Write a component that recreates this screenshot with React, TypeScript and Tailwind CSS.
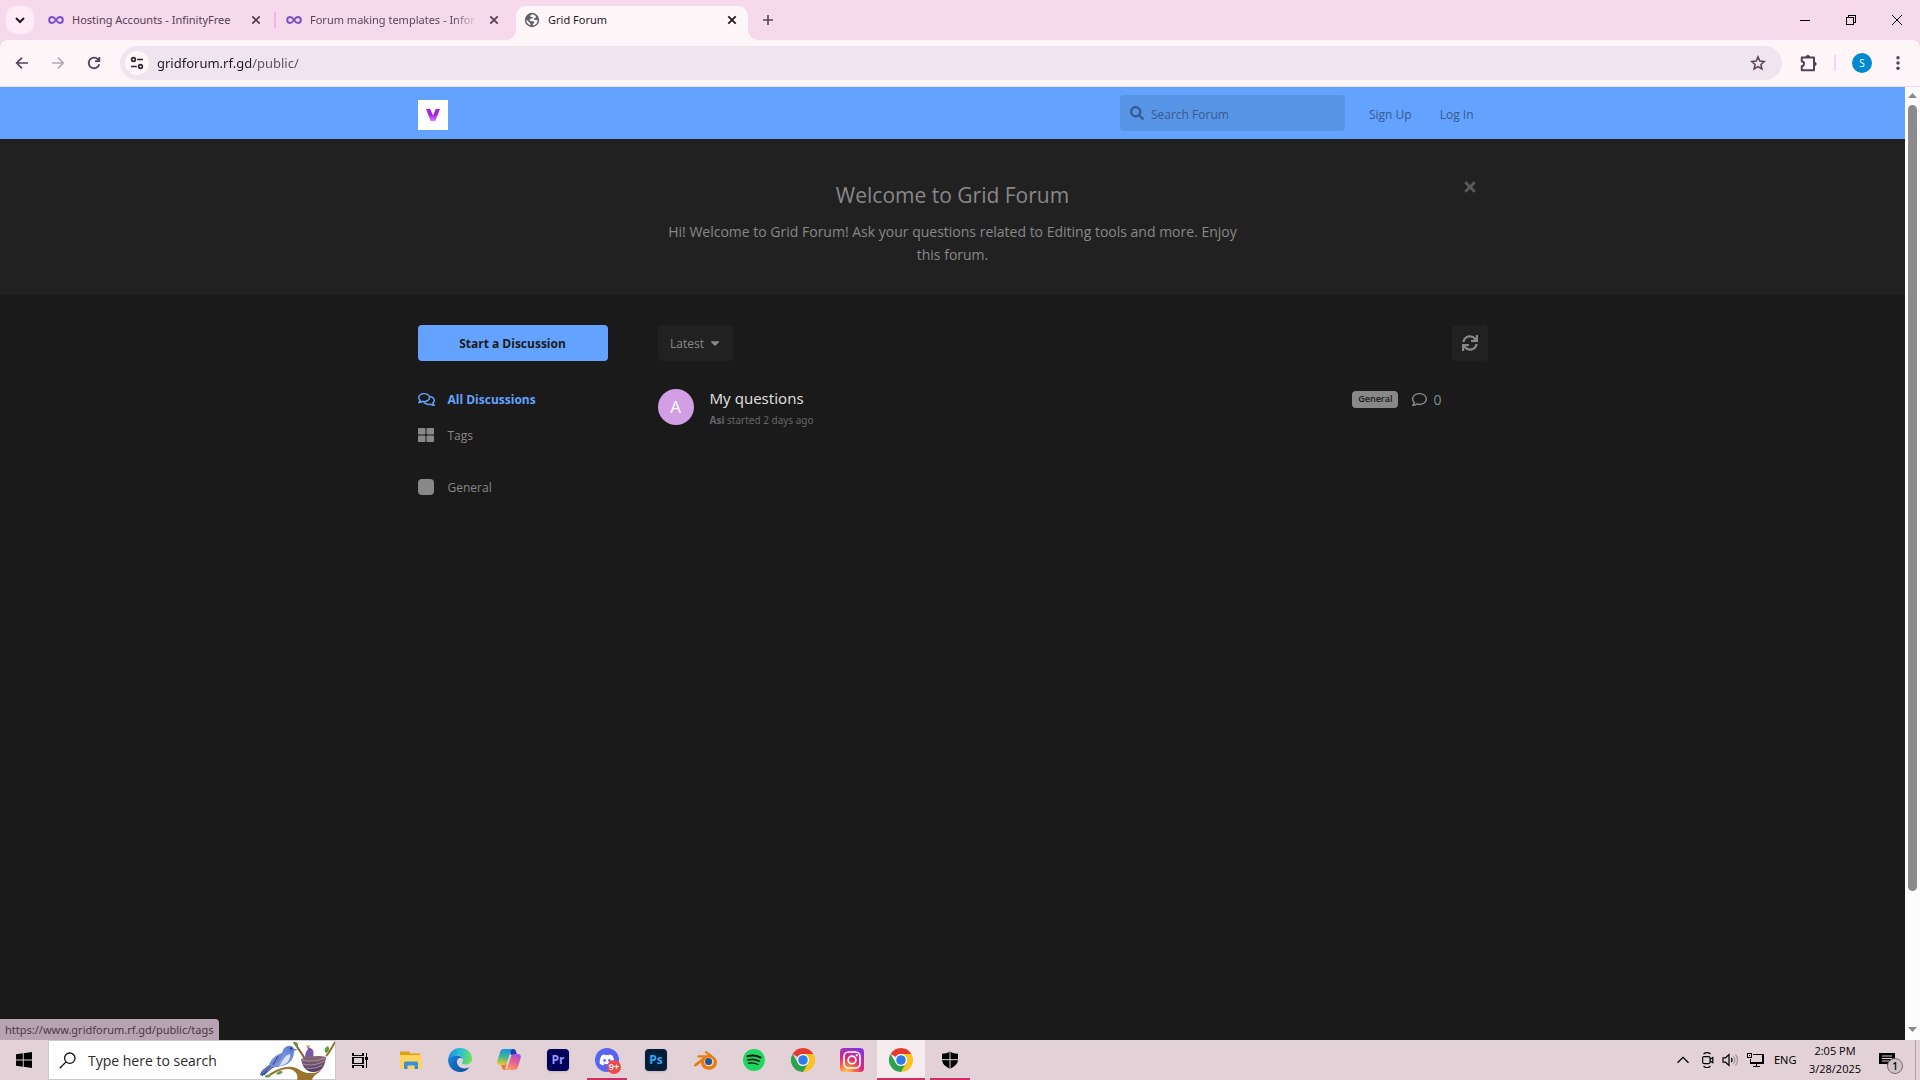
import React from "react";
import {
  FaCaretDown,
  FaDiscord,
  FaRegComment,
  FaRegComments,
  FaSearch,
  FaSync,
  FaThLarge,
  FaTimes,
} from "react-icons/fa";
import { SiBlender } from "react-icons/si";

/* ---------- Browser icons ---------- */

function InfinityIcon() {
  return (
    <svg viewBox="0 0 16 16" className="size-4 shrink-0" fill="none" stroke="#7b52c7" strokeWidth="2">
      <path d="M8 8C6.800 6.200 5.600 5 4.200 5a3 3 0 0 0 0 6C5.600 11 6.800 9.800 8 8s2.400-3 3.800-3a3 3 0 0 1 0 6C10.400 11 9.200 9.800 8 8z" />
    </svg>
  );
}

function GlobeIcon() {
  return (
    <svg viewBox="0 0 16 16" className="size-4 shrink-0">
      <circle cx="8" cy="8" r="7.200" fill="#5f6368" />
      <path
        d="M8.800 2.300 6 3.600l.6 1.300 2 .1.400 1.300-2.700.5-.9 1.500 1.900.9 2.200.1.900 1.500-1.700 1.400.1 1.400c2.600-.3 4.800-2.400 4.900-5.300l-1.900-.5-1.500.2-.6-1.300 2-.9.2-1.600A5.700 5.700 0 0 0 8.800 2.300zM2.200 7.600c.1 2.900 1.900 5 4.100 5.600l.2-1.500-2-2.200z"
        fill="#fff6fa"
      />
    </svg>
  );
}

function CloseIcon() {
  return (
    <svg viewBox="0 0 16 16" className="size-4" fill="none" stroke="currentColor" strokeWidth="1.800">
      <path d="M4.300 4.300l7.400 7.400M11.700 4.300l-7.400 7.400" />
    </svg>
  );
}

function ArrowIcon({ flip = false }: { flip?: boolean }) {
  return (
    <svg viewBox="0 0 16 16" className={flip ? "size-4 -scale-x-100" : "size-4"} fill="none" stroke="currentColor" strokeWidth="1.700">
      <path d="M14 8H3M8 2.700 2.700 8 8 13.300" />
    </svg>
  );
}

function ReloadIcon() {
  return (
    <svg viewBox="0 0 16 16" className="size-4" fill="none" stroke="currentColor" strokeWidth="1.800">
      <path d="M13.200 9.200A5.300 5.300 0 1 1 12 4.400L13 5.600" />
      <path d="M13.300 2v4.200H9" />
    </svg>
  );
}

function TuneIcon() {
  return (
    <svg viewBox="0 0 16 16" className="size-4" fill="none" stroke="#2a2228" strokeWidth="1.600">
      <circle cx="4.500" cy="4.500" r="1.900" />
      <path d="M8.200 4.500H14M2 11.500h5.800" />
      <circle cx="11.500" cy="11.500" r="1.900" />
    </svg>
  );
}

function StarIcon() {
  return (
    <svg viewBox="0 0 16 16" className="size-4" fill="none" stroke="#574055" strokeWidth="1.500">
      <path d="M8 1.900l1.800 4.200 4.500.4-3.400 3 1 4.400L8 11.600l-3.900 2.300 1-4.400-3.400-3 4.500-.4z" />
    </svg>
  );
}

function PuzzleIcon() {
  return (
    <svg viewBox="0 0 18 18" className="size-5" fill="none" stroke="#574055" strokeWidth="1.800">
      <path d="M2.500 4h11v11.500h-11v-3.700a2 2 0 0 0 0-4.100z" strokeLinejoin="round" />
      <path d="M6.400 3.600a1.600 1.600 0 0 1 3.200 0zM13.900 8.200a1.600 1.600 0 0 1 0 3.200z" fill="#574055" strokeWidth="0.800" />
    </svg>
  );
}

function Tab({ title, wide }: { title: string; wide: boolean }) {
  return (
    <div className="flex h-full w-[238px] items-center pl-2 text-[#574055]">
      <InfinityIcon />
      <span
        className={
          wide
            ? "ml-2 w-[168px] overflow-hidden whitespace-nowrap bg-linear-to-r from-[#574055] from-85% to-transparent bg-clip-text pt-px font-['Noto_Sans',sans-serif] text-[11px] text-transparent"
            : "ml-2 w-[168px] overflow-hidden whitespace-nowrap pt-px font-['Noto_Sans',sans-serif] text-[11px]"
        }
      >
        {title}
      </span>
      <button aria-label={"Close " + title} className="ml-2">
        <CloseIcon />
      </button>
    </div>
  );
}

function TabStrip() {
  return (
    <div className="flex h-10 shrink-0 items-center bg-[#f7d9ec]">
      <button aria-label="Search tabs" className="ml-1.5 flex size-7 items-center justify-center rounded-[10px] bg-[#ffebf6]">
        <svg viewBox="0 0 16 16" className="size-4" fill="none" stroke="#1f1a1d" strokeWidth="2">
          <path d="M4 6l4 4 4-4" />
        </svg>
      </button>
      <div className="ml-1.5 flex h-full items-center">
        <Tab title="Hosting Accounts - InfinityFree" wide={false} />
        <span className="-ml-1 mr-0.5 h-4 w-0.5 bg-[#f3b5e6]" />
        <Tab title="Forum making templates - Infor" wide />
      </div>
      <div className="relative mt-1.5 flex h-[34px] w-[232px] items-center self-stretch rounded-t-[10px] bg-[#fff6fa] pb-1.5 text-[#1f1a1d]">
        <svg viewBox="0 0 10 10" className="absolute bottom-0 -left-2.5 size-2.5" fill="#fff6fa">
          <path d="M10 0v10H0A10 10 0 0 0 10 0z" />
        </svg>
        <svg viewBox="0 0 10 10" className="absolute bottom-0 -right-2.5 size-2.5" fill="#fff6fa">
          <path d="M0 0v10h10A10 10 0 0 1 0 0z" />
        </svg>
        <span className="ml-2 flex flex-1 items-center gap-2 font-['Noto_Sans',sans-serif] text-[11px]">
          <GlobeIcon />
          <span className="pt-px">Grid Forum</span>
        </span>
        <button aria-label="Close Grid Forum" className="mr-2">
          <CloseIcon />
        </button>
      </div>
      <button aria-label="New tab" className="ml-3 text-[#574055]">
        <svg viewBox="0 0 16 16" className="size-4" fill="none" stroke="currentColor" strokeWidth="1.600">
          <path d="M8 3v10M3 8h10" />
        </svg>
      </button>
      <div className="ml-auto flex h-full items-center text-black">
        <button aria-label="Minimize" className="flex w-[46px] justify-center">
          <svg viewBox="0 0 10 10" className="size-2.5" stroke="currentColor" shapeRendering="crispEdges">
            <path d="M0 5.500h10" />
          </svg>
        </button>
        <button aria-label="Restore" className="flex w-[46px] justify-center">
          <svg viewBox="0 0 10 10" className="size-2.5" fill="none" stroke="currentColor" shapeRendering="crispEdges">
            <path d="M.5 2.500h7v7h-7zM2.500 2.500v-2h7v7h-2" />
          </svg>
        </button>
        <button aria-label="Close window" className="flex w-[46px] justify-center">
          <svg viewBox="0 0 10 10" className="size-2.5" fill="none" stroke="currentColor">
            <path d="M0 0l10 10M10 0L0 10" />
          </svg>
        </button>
      </div>
    </div>
  );
}

function Toolbar() {
  return (
    <div className="shrink-0 bg-[#f7d9ec]">
      <div className="flex h-[47px] items-center rounded-t-[8px] border-b border-[#eed9e6] bg-[#fff6fa] text-[#574055]">
        <div className="ml-3.5 flex items-center gap-5">
          <button aria-label="Back"><ArrowIcon /></button>
          <button aria-label="Forward" className="text-[#b3a8b0]"><ArrowIcon flip /></button>
          <button aria-label="Reload"><ReloadIcon /></button>
        </div>
        <div className="ml-[18px] flex h-[34px] flex-1 items-center rounded-full bg-[#f0e4ee] pl-[5px]">
          <button aria-label="Site information" className="flex size-6 items-center justify-center rounded-full bg-[#fff6fa]">
            <TuneIcon />
          </button>
          <input
            aria-label="Address"
            defaultValue="gridforum.rf.gd/public/"
            className="ml-2 min-w-0 flex-1 bg-linear-to-r from-[#1f1a1d] from-[94px] to-[#5c4c59] to-[94px] bg-clip-text pt-px font-['Noto_Sans',sans-serif] text-[13px] text-transparent outline-none"
          />
          <button aria-label="Bookmark" className="mr-4"><StarIcon /></button>
        </div>
        <button aria-label="Extensions" className="ml-[17px]"><PuzzleIcon /></button>
        <span className="ml-[15px] h-4 w-0.5 bg-[#fbd3f0]" />
        <button aria-label="Profile" className="ml-4 flex size-5 items-center justify-center rounded-full bg-[#0288d1] text-[10px] text-white">
          S
        </button>
        <button aria-label="Menu" className="ml-[18px] mr-3.5">
          <svg viewBox="0 0 16 16" className="size-4" fill="currentColor">
            <circle cx="8" cy="2.800" r="1.700" />
            <circle cx="8" cy="8" r="1.700" />
            <circle cx="8" cy="13.200" r="1.700" />
          </svg>
        </button>
      </div>
    </div>
  );
}

/* ---------- Forum ---------- */

function ForumHeader() {
  return (
    <header className="h-[52px] bg-[#63a3ff]">
      <div className="mx-auto flex h-full max-w-[1070px] items-center text-xs text-[#385a8e]">
        <a href="#" aria-label="Grid Forum" className="mt-1 flex size-[30px] items-center justify-center bg-white">
          <svg viewBox="0 0 14 12" className="w-3.5">
            <defs>
              <linearGradient id="brand" x1="0" y1="0" x2="0" y2="1">
                <stop offset="0.500" stopColor="#a424e6" />
                <stop offset="1" stopColor="#dc7cf2" />
              </linearGradient>
            </defs>
            <path d="M0 0h4.300L7 6.500 9.700 0H14L9.300 12H4.700z" fill="url(#brand)" />
          </svg>
        </a>
        <label className="ml-auto flex h-9 w-[225px] items-center rounded bg-[#5895e6] pl-2.5">
          <FaSearch className="size-3.5" />
          <input
            type="search"
            aria-label="Search Forum"
            placeholder="Search Forum"
            className="ml-[7px] min-w-0 flex-1 bg-transparent pt-1 outline-none placeholder:text-[#385a8e]"
          />
        </label>
        <button className="ml-6 pt-1">Sign Up</button>
        <button className="ml-7 mr-3.5 pt-1">Log In</button>
      </div>
    </header>
  );
}

function Hero() {
  return (
    <section className="bg-[#212121] text-[#888]">
      <div className="relative mx-auto h-[156px] max-w-[1070px] pt-10 text-center">
        <button aria-label="Close welcome message" className="absolute right-2.5 top-10 text-[#5a5a5a]">
          <FaTimes className="size-4" />
        </button>
        <h2 className="text-[21px] leading-8">Welcome to Grid Forum</h2>
        <p className="mx-auto mt-[9px] max-w-[590px] text-[14px] leading-[23px]">
          Hi! Welcome to Grid Forum! Ask your questions related to Editing tools and more. Enjoy this forum.
        </p>
      </div>
    </section>
  );
}

function SideNav() {
  return (
    <nav className="w-[190px] text-xs text-[#888]">
      <button className="h-9 w-full rounded bg-[#63a3ff] pt-px font-bold text-[#1a1a1a]">Start a Discussion</button>
      <ul className="mt-5">
        <li>
          <a href="#" className="flex h-9 items-center gap-[13px] font-bold text-[#63a3ff]">
            <FaRegComments className="size-[17px]" />
            <span className="pt-0.5">All Discussions</span>
          </a>
        </li>
        <li>
          <a href="#" className="flex h-9 items-center gap-3.5">
            <FaThLarge className="size-4" />
            <span className="pt-0.5">Tags</span>
          </a>
        </li>
        <li className="mt-4">
          <a href="#" className="flex h-9 items-center gap-3.5">
            <span className="size-4 rounded bg-[#888]" />
            <span className="pt-0.5">General</span>
          </a>
        </li>
      </ul>
    </nav>
  );
}

function DiscussionList() {
  return (
    <main className="min-w-0 flex-1 text-[#888]">
      <div className="flex items-center justify-between">
        <button className="flex h-9 w-[75px] items-center justify-center gap-1 rounded bg-[#212121] pl-0.5 text-xs">
          <span className="pt-0.5">Latest</span>
          <FaCaretDown className="size-3.5" />
        </button>
        <button aria-label="Refresh" className="flex size-9 items-center justify-center rounded bg-[#212121]">
          <FaSync className="size-4" />
        </button>
      </div>
      <article className="mt-6 flex pt-1">
        <span className="flex size-9 items-center justify-center rounded-full bg-[#d29ee4] text-[17px] text-white">A</span>
        <a href="#" className="-mt-px ml-4 flex-1">
          <h3 className="font-['Noto_Sans',sans-serif] text-[15px] leading-5 text-[#ddd]">My questions</h3>
          <p className="mt-0.5 font-['Noto_Sans',sans-serif] text-[10px] leading-5 text-[#666]">
            <strong>Asi</strong> started 2 days ago
          </p>
        </a>
        <div className="mr-[46px] flex h-5 items-center">
          <span className="flex h-[17px] items-center rounded bg-[#888] px-1.5 text-[9px] font-semibold text-[#1a1a1a]">General</span>
          <FaRegComment className="ml-3.5 size-[15px]" />
          <span className="ml-1.5 text-[14px]">0</span>
        </div>
      </article>
    </main>
  );
}

function Scrollbar() {
  return (
    <div className="flex w-[15px] shrink-0 flex-col items-center bg-[#fcfcfc] py-1.5">
      <svg viewBox="0 0 9 5" className="w-[9px]" fill="#8b8b8b"><path d="M0 5 4.500 0 9 5z" /></svg>
      <div className="mt-[7px] flex w-full flex-1 flex-col items-center">
        <span className="h-[85.200%] w-[9px] rounded-full bg-[#8b8b8b]" />
      </div>
      <svg viewBox="0 0 9 5" className="mb-0.5 w-[9px]" fill="#8b8b8b"><path d="M0 0 4.500 5 9 0z" /></svg>
    </div>
  );
}

/* ---------- Taskbar ---------- */

function BirdArt() {
  return (
    <svg viewBox="0 0 76 39" className="h-[39px] w-[76px] shrink-0">
      <defs>
        <linearGradient id="bird" x1="1" y1="0" x2="0" y2="1">
          <stop offset="0" stopColor="#4e6fd0" />
          <stop offset="0.500" stopColor="#8aa2e8" />
          <stop offset="1" stopColor="#4a5f9e" />
        </linearGradient>
        <linearGradient id="nest" x1="0" y1="0" x2="0" y2="1">
          <stop offset="0" stopColor="#8b6a72" />
          <stop offset="1" stopColor="#4d3a6b" />
        </linearGradient>
      </defs>
      <path d="M76 1c-3 5-5 10-9 14" stroke="#96702f" strokeWidth="2" fill="none" />
      <path d="M35 1c3 5 7 10 11 17" stroke="#7f602c" strokeWidth="2" fill="none" />
      <path d="M10 33c8-5 16-8 23-7 8 1 10 7 20 6 4 0 7-2 10-3-3 3-9 5-10 10H38c2-5-2-11-9-11-6 0-12 3-18 7z" fill="#9a742c" />
      <path d="M67 12c-3-3 0-6 2-7 2 3 1 6-2 7zM38 6c-2-1-2-3-1-5 2 1 3 3 1 5zM12 35c-3 2-6 2-6 0 2-2 4-2 6 0zM17 33c2-3 5-4 7-2-2 2-4 3-7 2z" fill="#5d9d49" />
      <path d="M1 34c1-5 5-7 9-10 2-6 6-10 13-12 1-5 5-8 9-7 2 1 3 2 3 3l4 0-4 2c0 8-4 13-11 15-6 1-11 1-14 4-3 3-5 7-9 5z" fill="url(#bird)" />
      <path d="M31 13c1 5-3 11-11 12 4-4 5-11 11-12z" fill="#dfe3f5" />
      <path d="M24 12c-6 2-10 6-12 12 7-1 12-5 12-12z" fill="#6d86c9" />
      <path d="M11 25l-8 10M14 26l-9 8M19 15l-5 9" stroke="#374a86" strokeWidth="1" />
      <circle cx="32" cy="7.500" r="0.900" fill="#16203f" />
      <path d="M46 17c0-4 1-7 3-9l-2-4 4 3c4 1 4 5 3 10z" fill="#7a58a8" />
      <path d="M47 5l3 2 1-3z" fill="#e5a24a" />
      <path d="M42 18c7-3 18-4 25-2-1 9-4 15-13 15-7 0-11-6-12-13z" fill="url(#nest)" />
      <path d="M43 19c7 2 16 1 23-2M44 23c7 2 14 1 21-3M47 27c6 1 11 0 16-3" stroke="#c3a0a8" strokeWidth="0.800" fill="none" />
    </svg>
  );
}

function ExplorerIcon() {
  return (
    <svg viewBox="0 0 24 24" className="size-6">
      <path d="M1 4.500a1 1 0 0 1 1-1h8l1.500 2H21v4H1z" fill="#e0a010" />
      <path d="M1 7h21a.8.8 0 0 1 .8.800V20a1 1 0 0 1-1 1H2a1 1 0 0 1-1-1z" fill="#ffd45e" />
      <path d="M5 21v-6a1.500 1.500 0 0 1 1.500-1.500h11A1.500 1.500 0 0 1 19 15v6h-3.500v-3.500h-7V21z" fill="#3a8fd8" />
    </svg>
  );
}

function EdgeIcon() {
  return (
    <svg viewBox="0 0 24 24" className="size-6">
      <defs>
        <linearGradient id="edgeTop" x1="0" y1="0.300" x2="1" y2="0.500">
          <stop offset="0" stopColor="#1b8fe0" />
          <stop offset="0.500" stopColor="#2bc3d6" />
          <stop offset="1" stopColor="#6ee056" />
        </linearGradient>
        <linearGradient id="edgeLow" x1="0" y1="0" x2="1" y2="1">
          <stop offset="0" stopColor="#1784dc" />
          <stop offset="1" stopColor="#0c4a9a" />
        </linearGradient>
      </defs>
      <path d="M.2 11C1 4.500 6 0 12 0c7 0 12 5 12 10.500 0 3.500-2.600 6-6 6-2.600 0-4-.8-4-1.700 0-.7 1-1.200 1-3 0-2.400-2.400-4.300-5.500-4.300C5.500 7.500 2 8.500.2 11z" fill="url(#edgeTop)" />
      <path d="M.2 11C2 8.500 5.500 7.300 9 7.500c3 .2 5 1.800 5.800 3-1-.6-2.300-.8-3.300-.4-2 .8-3 2.800-2.300 5.400 1 3.600 5 5.500 9 4.700 1.400-.3 2.600-.8 3.600-1.300C19.600 22 16 24 12 24 5 24-.5 18 .2 11z" fill="url(#edgeLow)" />
      <path d="M7.500 11.500c-1.500 5 1.500 10.500 7 12.200-8 .8-11.500-7-7-12.200z" fill="#1565b8" />
    </svg>
  );
}

function CopilotIcon() {
  return (
    <svg viewBox="0 0 24 24" className="size-6">
      <defs>
        <linearGradient id="copLeft" x1="0.500" y1="0" x2="0.400" y2="1">
          <stop offset="0" stopColor="#1593e8" />
          <stop offset="0.500" stopColor="#3fb98c" />
          <stop offset="1" stopColor="#f0c52c" />
        </linearGradient>
        <linearGradient id="copRight" x1="0.700" y1="0" x2="0.300" y2="1">
          <stop offset="0" stopColor="#a352e0" />
          <stop offset="0.500" stopColor="#ec5f92" />
          <stop offset="1" stopColor="#ffa05a" />
        </linearGradient>
      </defs>
      <path d="M12 1h4c2 0 2.700 1.300 3.200 3L20 7h-6z" fill="#1b3fae" />
      <path d="M6.500 1H16c-1.500.3-2.200 1.500-2.800 3.500l-3 9.500c-.7 2.200-1.700 3-4 3H3c-2.600 0-3.300-2-2.500-4.700L3 4.200C3.700 2 4.700 1 6.500 1z" fill="url(#copLeft)" />
      <path d="M17.500 22H8c1.500-.3 2.200-1.500 2.800-3.500l3-9.500c.7-2.200 1.700-3 4-3H21c2.600 0 3.300 2 2.500 4.700L21 18.800c-.7 2.200-1.700 3.200-3.500 3.200z" fill="url(#copRight)" />
      <path d="M4 17h2.300c2 0 3-.7 3.700-2.500L8.500 20C8 21.500 8.500 22 9 22 5.500 22 5.300 21 4.700 19z" fill="#ee7a33" />
    </svg>
  );
}

function ChromeIcon() {
  return (
    <svg viewBox="0 0 24 24" className="size-6">
      <path d="M12 0a12 12 0 0 1 10.400 6H12a6 6 0 0 0-5.200 3L1.600 6A12 12 0 0 1 12 0z" fill="#e33b2e" />
      <path d="M22.400 6A12 12 0 0 1 12 24l5.200-9A6 6 0 0 0 17.200 9L12 6z" fill="#fcc31e" />
      <path d="M12 24A12 12 0 0 1 1.600 6l5.200 9a6 6 0 0 0 7.500 2.600l2.900-2.600z" fill="#2ba24c" />
      <circle cx="12" cy="12" r="6" fill="#fff" />
      <circle cx="12" cy="12" r="4.800" fill="#2f7de9" />
    </svg>
  );
}

function InstagramIcon() {
  return (
    <svg viewBox="0 0 24 24" className="size-6">
      <defs>
        <radialGradient id="insta" cx="0.270" cy="1.050" r="1.100">
          <stop offset="0" stopColor="#ffdc6a" />
          <stop offset="0.300" stopColor="#fb7a3a" />
          <stop offset="0.600" stopColor="#e0257c" />
          <stop offset="1" stopColor="#8a34d8" />
        </radialGradient>
      </defs>
      <rect width="24" height="24" rx="4" fill="url(#insta)" />
      <g fill="none" stroke="#fff" strokeWidth="1.700">
        <rect x="4" y="4" width="16" height="16" rx="4.500" />
        <circle cx="12" cy="12" r="3.900" />
      </g>
      <circle cx="16.700" cy="7.300" r="1.100" fill="#fff" />
    </svg>
  );
}

function SpotifyIcon() {
  return (
    <svg viewBox="0 0 22 22" className="size-[22px]">
      <circle cx="11" cy="11" r="11" fill="#1ed760" />
      <g fill="none" stroke="#0a1a10" strokeLinecap="round">
        <path d="M4.500 7.200c4.500-1.200 9.200-.8 13 1.300" strokeWidth="2" />
        <path d="M5 10.900c3.900-1 7.900-.6 11.300 1.300" strokeWidth="1.700" />
        <path d="M5.500 14.300c3.400-.8 6.600-.4 9.500 1.200" strokeWidth="1.400" />
      </g>
    </svg>
  );
}

function AdobeTile({ label, tone }: { label: string; tone: string }) {
  return <span className={"flex size-[22px] items-center justify-center rounded text-[12px] font-bold shadow " + tone}>{label}</span>;
}

function DiscordIcon() {
  return (
    <span className="relative flex size-6 items-center justify-center rounded-full bg-[#5865f2] text-white">
      <FaDiscord className="size-4" />
      <span className="absolute -bottom-0.5 -right-0.5 flex size-3.5 items-center justify-center rounded-full bg-[#ed4c4f] text-[9px] font-semibold">9+</span>
    </span>
  );
}

function ShieldIcon() {
  return (
    <svg viewBox="0 0 18 18" className="size-[18px]">
      <path d="M9 .5c2.500 1.700 5 2.200 8 2.200v5.800c0 4-3.500 7.500-8 9.200-4.500-1.700-8-5.200-8-9.200V2.700C4 2.700 6.500 2.200 9 .5z" />
      <path d="M9 0v18M0 8.700h18" stroke="#e2d1d7" strokeWidth="1" />
    </svg>
  );
}

const apps = [
  { name: "File Explorer", icon: <ExplorerIcon />, state: "idle" },
  { name: "Edge", icon: <EdgeIcon />, state: "idle" },
  { name: "Copilot", icon: <CopilotIcon />, state: "idle" },
  { name: "Premiere Pro", icon: <AdobeTile label="Pr" tone="bg-[#00005b] text-[#9999ff]" />, state: "idle" },
  { name: "Discord", icon: <DiscordIcon />, state: "open" },
  { name: "Photoshop", icon: <AdobeTile label="Ps" tone="bg-[#001e36] text-[#31a8ff]" />, state: "idle" },
  {
    name: "Blender",
    icon: (
      <span className="relative flex">
        <SiBlender className="size-[23px] text-[#e87d0d]" />
        <span className="absolute right-[5px] top-[9px] size-[7px] rounded-full bg-[#265787]" />
      </span>
    ),
    state: "idle",
  },
  { name: "Spotify", icon: <SpotifyIcon />, state: "idle" },
  { name: "Chrome", icon: <ChromeIcon />, state: "idle" },
  { name: "Instagram", icon: <InstagramIcon />, state: "idle" },
  { name: "Chrome window", icon: <ChromeIcon />, state: "active" },
  { name: "Windows Security", icon: <ShieldIcon />, state: "open" },
];

function Tray() {
  return (
    <div className="ml-auto flex h-full items-center text-black">
      <button aria-label="Show hidden icons">
        <svg viewBox="0 0 12 8" className="w-3" fill="none" stroke="currentColor" strokeWidth="1.300"><path d="M.5 6.800 6 1.300l5.500 5.500" /></svg>
      </button>
      <button aria-label="Meet Now" className="ml-[11px]">
        <svg viewBox="0 0 16 16" className="size-4" fill="none" stroke="currentColor" strokeWidth="1.200">
          <rect x="2.600" y="4.600" width="7.500" height="7" rx="1.500" />
          <path d="M10.100 7.200 12.800 5.500v5.200L10.100 9M3.500 2C5.500.3 8.500.3 10.500 2M3.500 14.200c2 1.700 5 1.700 7 0" />
        </svg>
      </button>
      <button aria-label="Volume" className="ml-1.5">
        <svg viewBox="0 0 17 16" className="h-4" fill="none" stroke="currentColor" strokeWidth="1.200">
          <path d="M1 5.800h2.500L7 2.600v10.800L3.500 10.200H1z" />
          <path d="M9.300 6c1 1.200 1 2.800 0 4" />
          <path d="M11.300 4.300c1.900 2.200 1.900 5.200 0 7.400M13.500 2.500c2.700 3.200 2.700 7.800 0 11" stroke="#a2969b" />
        </svg>
      </button>
      <button aria-label="Network" className="ml-2">
        <svg viewBox="0 0 17 16" className="h-4" fill="none" stroke="currentColor" strokeWidth="1.200" shapeRendering="crispEdges">
          <path d="M5.500 2.500h10.500v8.500H3.500V6.500M.5 1.500h4v4h-4zM9.500 11v3M6 14.500h7M2.500 3v1" />
        </svg>
      </button>
      <span className="ml-2.5 w-6 font-['Noto_Sans',sans-serif] text-[11px]">ENG</span>
      <time className="ml-2 w-[58px] text-center text-[11px] leading-[18px]">
        2:05 PM
        <br />
        3/28/2025
      </time>
      <button aria-label="Notifications" className="relative ml-[15px]">
        <svg viewBox="0 0 16 16" className="size-4">
          <path d="M0 1h16v11h-5v3.500L7.500 12H0z" />
          <path d="M3 4h10M3 6.500h10M3 9h7" stroke="#e2d1d7" strokeWidth="1.100" />
        </svg>
        <span className="absolute -bottom-1.5 -right-2 flex size-4 items-center justify-center rounded-full border border-[#77696e] bg-[#cdc3c6] text-[10px] font-semibold">
          1
        </span>
      </button>
      <span className="ml-5 mr-1 h-full w-px bg-[#b3a3a9]" />
    </div>
  );
}

function Taskbar() {
  return (
    <footer className="flex h-10 shrink-0 items-center bg-[#e2d1d7]">
      <button aria-label="Start" className="ml-4">
        <svg viewBox="0 0 16 16" className="size-4">
          <path d="M0 2.300 6.800 1.300v6.200H0zM7.700 1.200 16 0v7.500H7.700zM0 8.400h6.800v6.300L0 13.700zM7.700 8.400H16V16l-8.300-1.200z" />
        </svg>
      </button>
      <label className="ml-4 flex h-full w-[288px] items-center border border-[#c9c9c9] bg-white pl-2.5">
        <svg viewBox="0 0 17 17" className="size-[17px] shrink-0" fill="none" stroke="#111" strokeWidth="1.300">
          <circle cx="10.800" cy="6.200" r="5.200" />
          <path d="M7 9.900.8 16.200" />
        </svg>
        <input
          aria-label="Type here to search"
          placeholder="Type here to search"
          className="ml-3 min-w-0 flex-1 bg-transparent text-[14px] outline-none placeholder:text-[#2b2b2b]"
        />
        <BirdArt />
      </label>
      <button aria-label="Task view" className="flex w-12 justify-center">
        <svg viewBox="0 0 17 17" className="size-[17px]" fill="none" stroke="#000" strokeWidth="1.300" shapeRendering="crispEdges">
          <path d="M1 1v2.500h10V1M1 16v-2.500h10V16M1 5.500h10v6H1zM14.500 1v15" />
          <path d="M13 4.500h3v3h-3z" fill="#000" stroke="none" />
        </svg>
      </button>
      <div className="ml-[3px] flex h-full gap-px">
        {apps.map((app) => (
          <button
            key={app.name}
            aria-label={app.name}
            className={
              "relative flex h-full w-12 items-center justify-center " + (app.state === "active" ? "bg-[#f3ebee]" : "")
            }
          >
            {app.icon}
            {app.state !== "idle" && (
              <span
                className={
                  app.state === "active"
                    ? "absolute inset-x-0 bottom-0 h-0.5 bg-[#cc2f66]"
                    : "absolute inset-x-1 bottom-0 h-0.5 bg-[#cc2f66]"
                }
              />
            )}
          </button>
        ))}
      </div>
      <Tray />
    </footer>
  );
}

export default function App() {
  return (
    <div className="flex h-screen flex-col overflow-hidden bg-[#1a1a1a] font-['Open_Sans','Noto_Sans',sans-serif]">
      <TabStrip />
      <Toolbar />
      <div className="relative flex min-h-0 flex-1">
        <div className="min-w-0 flex-1">
          <ForumHeader />
          <Hero />
          <div className="mx-auto mt-[30px] flex max-w-[1070px] gap-[50px]">
            <SideNav />
            <DiscussionList />
          </div>
        </div>
        <Scrollbar />
        <div className="absolute bottom-0 left-0 flex h-[21px] items-center rounded-tr bg-[#b8a3b3] px-[5px] pt-px font-['Noto_Sans',sans-serif] text-[11px] text-[#473a45]">
          https://www.gridforum.rf.gd/public/tags
        </div>
      </div>
      <Taskbar />
    </div>
  );
}
